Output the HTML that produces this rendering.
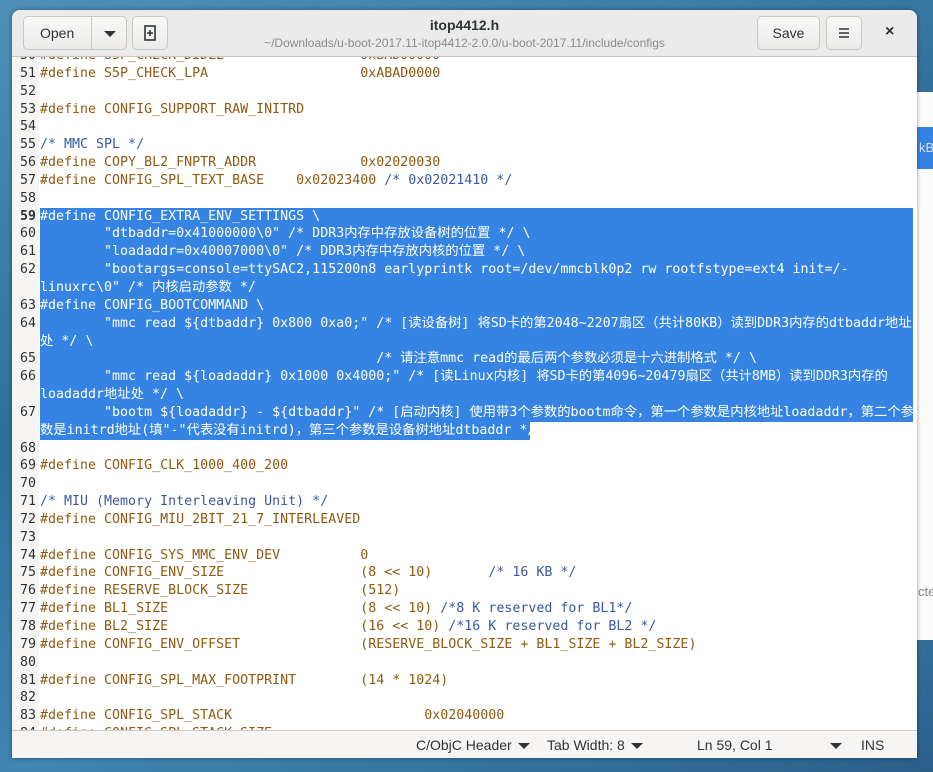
<!DOCTYPE html>
<html><head><meta charset="utf-8"><style>
*{margin:0;padding:0;box-sizing:border-box}
body{width:933px;height:772px;overflow:hidden;background:linear-gradient(160deg,#4f8fb8 0%,#2f6f9a 40%,#3f86b0 70%,#2a5f8a 100%);font-family:"Liberation Sans","Noto Sans CJK SC",sans-serif;position:relative}
#side{position:absolute;left:916px;top:92px;width:17px;height:548px;background:#fcfcfc;font-size:13px;color:#888}
#side .b{position:absolute;top:35px;left:0;width:17px;height:42px;background:#3584e4;color:#dde;line-height:42px;padding-left:3px}
#win{position:absolute;left:12px;top:10px;width:905px;height:748px;background:#fff;border-radius:8px 8px 0 0;overflow:hidden;box-shadow:0 0 4px rgba(0,0,0,.4)}
#hdr{position:absolute;left:0;top:0;width:905px;height:47px;background:#ebebeb;border-bottom:1px solid #c8c4c0}
.btn{position:absolute;top:6px;height:34px;border:1px solid #cdc7c2;border-radius:5px;background:linear-gradient(#f8f8f7,#ecebea);font-size:14px;color:#2e3436;text-align:center;line-height:32px}
#title{position:absolute;left:0;width:905px;top:7px;text-align:center;font-weight:bold;font-size:14px;color:#2e3436}
#sub{position:absolute;left:0;width:905px;top:26px;text-align:center;font-size:12px;color:#8a8a8a}
#code{position:absolute;left:0;top:37px;width:905px;font-family:"DejaVu Sans Mono","Noto Sans CJK SC",monospace;font-size:13.3px}
.r{height:17.85px;line-height:17.85px;white-space:pre;position:relative}
.n{position:absolute;left:0;width:27px;height:17.85px;background:#f6f5f4;text-align:right;padding-right:3px;color:#2e3436}
.t{position:absolute;left:28px;right:0;color:#2e3436;padding-left:0}
.s .t{background:#3584e4;color:#fff;right:4px}
.p{color:#8f5a12}.c{color:#3a59a0}
#gut{position:absolute;left:0;top:47px;width:27px;height:700px;background:#f6f5f4}
#status{position:absolute;left:0;top:720px;width:905px;height:28px;background:#f6f5f4;border-top:1px solid #d0ccc8;font-size:14px;color:#2e3436}
#status span{position:absolute;top:6px}
.tri{display:inline-block;width:0;height:0;border-left:6px solid transparent;border-right:6px solid transparent;border-top:6px solid #2e3436;vertical-align:middle;margin-left:6px}
</style></head><body>
<div id="side"><div class="b">kB</div><div style="position:absolute;top:492px;left:2px">cte</div></div>
<div id="win">
<div id="gut"></div>
<div id="code">
<div class="r"><span class="n">50</span><span class="t"><span class="p">#define S5P_CHECK_DIDLE                 0xBAD00000</span></span></div>
<div class="r"><span class="n">51</span><span class="t"><span class="p">#define S5P_CHECK_LPA                   0xABAD0000</span></span></div>
<div class="r"><span class="n">52</span><span class="t"></span></div>
<div class="r"><span class="n">53</span><span class="t"><span class="p">#define CONFIG_SUPPORT_RAW_INITRD</span></span></div>
<div class="r"><span class="n">54</span><span class="t"></span></div>
<div class="r"><span class="n">55</span><span class="t"><span class="c">/* MMC SPL */</span></span></div>
<div class="r"><span class="n">56</span><span class="t"><span class="p">#define COPY_BL2_FNPTR_ADDR             0x02020030</span></span></div>
<div class="r"><span class="n">57</span><span class="t"><span class="p">#define CONFIG_SPL_TEXT_BASE    0x02023400 </span><span class="c">/* 0x02021410 */</span></span></div>
<div class="r"><span class="n">58</span><span class="t"></span></div>
<div class="r s"><span class="n" style="font-weight:bold">59</span><span class="t">#define CONFIG_EXTRA_ENV_SETTINGS \</span></div>
<div class="r s"><span class="n">60</span><span class="t">        "dtbaddr=0x41000000\0" /* DDR3内存中存放设备树的位置 */ \</span></div>
<div class="r s"><span class="n">61</span><span class="t">        "loadaddr=0x40007000\0" /* DDR3内存中存放内核的位置 */ \</span></div>
<div class="r s"><span class="n">62</span><span class="t">        "bootargs=console=ttySAC2,115200n8 earlyprintk root=/dev/mmcblk0p2 rw rootfstype=ext4 init=/-</span></div>
<div class="r s"><span class="n"></span><span class="t">linuxrc\0" /* 内核启动参数 */</span></div>
<div class="r s"><span class="n">63</span><span class="t">#define CONFIG_BOOTCOMMAND \</span></div>
<div class="r s"><span class="n">64</span><span class="t">        "mmc read ${dtbaddr} 0x800 0xa0;" /* [读设备树] 将SD卡的第2048~2207扇区（共计80KB）读到DDR3内存的dtbaddr地址</span></div>
<div class="r s"><span class="n"></span><span class="t">处 */ \</span></div>
<div class="r s"><span class="n">65</span><span class="t">                                          /* 请注意mmc read的最后两个参数必须是十六进制格式 */ \</span></div>
<div class="r s"><span class="n">66</span><span class="t">        "mmc read ${loadaddr} 0x1000 0x4000;" /* [读Linux内核] 将SD卡的第4096~20479扇区（共计8MB）读到DDR3内存的</span></div>
<div class="r s"><span class="n"></span><span class="t">loadaddr地址处 */ \</span></div>
<div class="r s"><span class="n">67</span><span class="t">        "bootm ${loadaddr} - ${dtbaddr}" /* [启动内核] 使用带3个参数的bootm命令，第一个参数是内核地址loadaddr，第二个参</span></div>
<div class="r s"><span class="n"></span><span class="t" style="right:387px">数是initrd地址(填"-"代表没有initrd)，第三个参数是设备树地址dtbaddr */</span></div>
<div class="r"><span class="n">68</span><span class="t"></span></div>
<div class="r"><span class="n">69</span><span class="t"><span class="p">#define CONFIG_CLK_1000_400_200</span></span></div>
<div class="r"><span class="n">70</span><span class="t"></span></div>
<div class="r"><span class="n">71</span><span class="t"><span class="c">/* MIU (Memory Interleaving Unit) */</span></span></div>
<div class="r"><span class="n">72</span><span class="t"><span class="p">#define CONFIG_MIU_2BIT_21_7_INTERLEAVED</span></span></div>
<div class="r"><span class="n">73</span><span class="t"></span></div>
<div class="r"><span class="n">74</span><span class="t"><span class="p">#define CONFIG_SYS_MMC_ENV_DEV          0</span></span></div>
<div class="r"><span class="n">75</span><span class="t"><span class="p">#define CONFIG_ENV_SIZE                 (8 &lt;&lt; 10)       </span><span class="c">/* 16 KB */</span></span></div>
<div class="r"><span class="n">76</span><span class="t"><span class="p">#define RESERVE_BLOCK_SIZE              (512)</span></span></div>
<div class="r"><span class="n">77</span><span class="t"><span class="p">#define BL1_SIZE                        (8 &lt;&lt; 10) </span><span class="c">/*8 K reserved for BL1*/</span></span></div>
<div class="r"><span class="n">78</span><span class="t"><span class="p">#define BL2_SIZE                        (16 &lt;&lt; 10) </span><span class="c">/*16 K reserved for BL2 */</span></span></div>
<div class="r"><span class="n">79</span><span class="t"><span class="p">#define CONFIG_ENV_OFFSET               (RESERVE_BLOCK_SIZE + BL1_SIZE + BL2_SIZE)</span></span></div>
<div class="r"><span class="n">80</span><span class="t"></span></div>
<div class="r"><span class="n">81</span><span class="t"><span class="p">#define CONFIG_SPL_MAX_FOOTPRINT        (14 * 1024)</span></span></div>
<div class="r"><span class="n">82</span><span class="t"></span></div>
<div class="r"><span class="n">83</span><span class="t"><span class="p">#define CONFIG_SPL_STACK                        0x02040000</span></span></div>
<div class="r"><span class="n">84</span><span class="t"><span class="p">#define CONFIG_SPL_STACK_SIZE</span></span></div>
</div>
<div id="hdr">
<div class="btn" style="left:11px;width:104px;text-align:left"><span style="padding-left:16px">Open</span><span style="position:absolute;left:67px;top:0;height:32px;border-left:1px solid #cdc7c2;width:36px;text-align:center"><span class="tri" style="margin:0"></span></span></div>
<div class="btn" style="left:120px;width:36px"><svg width="14" height="16" viewBox="0 0 14 16" style="margin-top:8px"><rect x="2" y="1" width="10" height="14" fill="none" stroke="#2e3436" stroke-width="1.6"/><path d="M7 5v6M4 8h6" stroke="#2e3436" stroke-width="1.6"/></svg></div>
<div id="title">itop4412.h</div>
<div id="sub">~/Downloads/u-boot-2017.11-itop4412-2.0.0/u-boot-2017.11/include/configs</div>
<div class="btn" style="left:745px;width:63px">Save</div>
<div class="btn" style="left:814px;width:36px"><svg width="12" height="12" viewBox="0 0 12 12" style="margin-top:10px"><path d="M1 2h10M1 6h10M1 10h10" stroke="#2e3436" stroke-width="1.6"/></svg></div>
<div style="position:absolute;left:873px;top:13px;font-size:16px;font-weight:bold;color:#2e3436">×</div>
</div>
<div id="status">
<span style="left:404px">C/ObjC Header<span class="tri"></span></span>
<span style="left:535px">Tab Width: 8<span class="tri"></span></span>
<span style="left:685px">Ln 59, Col 1</span>
<span style="left:812px"><span class="tri"></span></span>
<span style="left:849px">INS</span>
</div>
</div>
</body></html>
